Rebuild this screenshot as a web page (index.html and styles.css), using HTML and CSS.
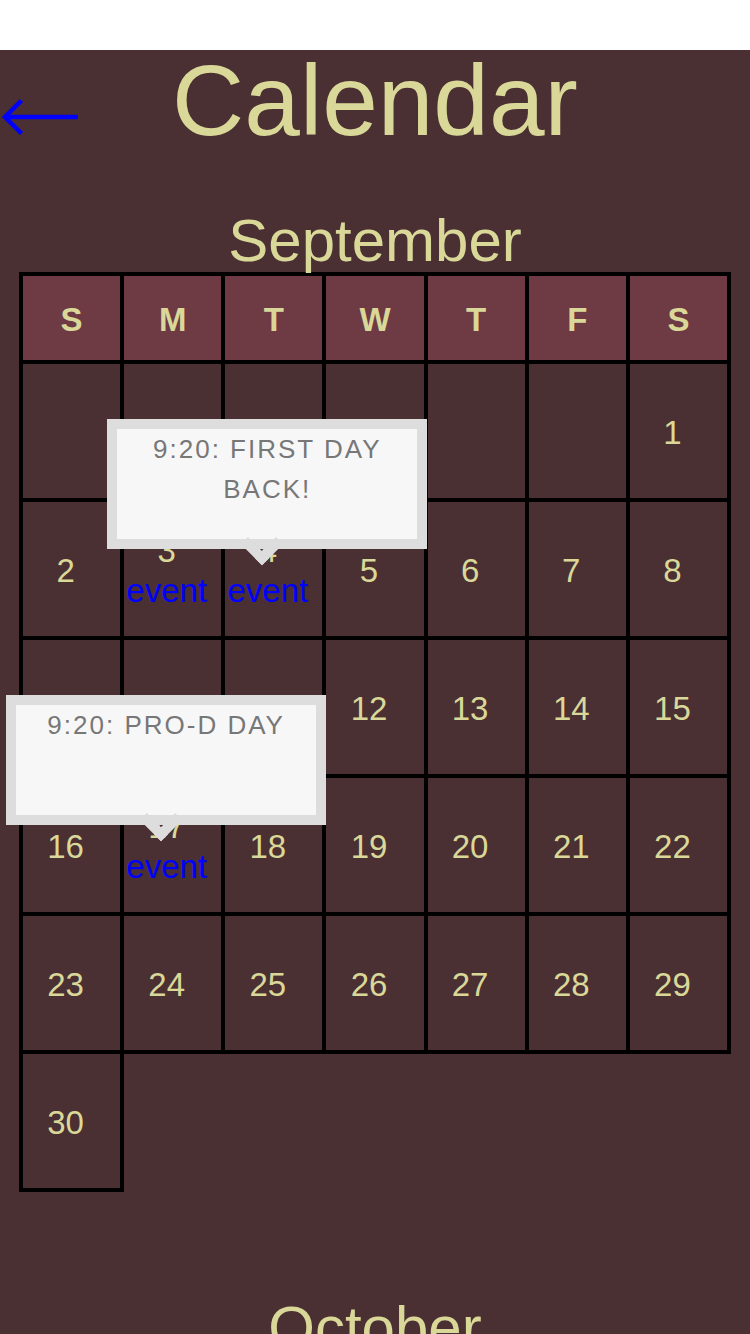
FILE: index.html
```html
<!DOCTYPE html>
<html lang="en">
<head>
<meta charset="utf-8">
<title>Calendar</title>
<link rel="stylesheet" href="styles.css">
</head>
<body>
<div class="topbar"></div>
<main class="page">
  <header class="header">
    <a class="back" href="#" aria-label="Back">
      <svg width="80" height="40" viewBox="0 0 80 40">
        <path d="M4 20 H78" stroke="#0000ff" stroke-width="4.5" fill="none"/>
        <path d="M21.5 3.5 L5 20 L21.5 36.5" stroke="#0000ff" stroke-width="4.5" fill="none"/>
      </svg>
    </a>
    <h1 class="title">Calendar</h1>
  </header>

  <section class="month">
    <h2 class="month-name">September</h2>
    <table class="cal">
      <thead>
        <tr>
          <th>S</th><th>M</th><th>T</th><th>W</th><th>T</th><th>F</th><th>S</th>
        </tr>
      </thead>
      <tbody>
        <tr>
          <td></td><td></td><td></td><td></td><td></td><td></td>
          <td><div class="num">1</div></td>
        </tr>
        <tr>
          <td><div class="num">2</div></td>
          <td><div class="num">3</div><a class="event" href="#">event</a></td>
          <td><div class="num">4</div><a class="event" href="#">event</a>
            <div class="tip">9:20: First day back!</div>
          </td>
          <td><div class="num">5</div></td>
          <td><div class="num">6</div></td>
          <td><div class="num">7</div></td>
          <td><div class="num">8</div></td>
        </tr>
        <tr>
          <td><div class="num">9</div></td>
          <td><div class="num">10</div></td>
          <td><div class="num">11</div></td>
          <td><div class="num">12</div></td>
          <td><div class="num">13</div></td>
          <td><div class="num">14</div></td>
          <td><div class="num">15</div></td>
        </tr>
        <tr>
          <td><div class="num">16</div></td>
          <td><div class="num">17</div><a class="event" href="#">event</a>
            <div class="tip">9:20: Pro-D Day</div>
          </td>
          <td><div class="num">18</div></td>
          <td><div class="num">19</div></td>
          <td><div class="num">20</div></td>
          <td><div class="num">21</div></td>
          <td><div class="num">22</div></td>
        </tr>
        <tr>
          <td><div class="num">23</div></td>
          <td><div class="num">24</div></td>
          <td><div class="num">25</div></td>
          <td><div class="num">26</div></td>
          <td><div class="num">27</div></td>
          <td><div class="num">28</div></td>
          <td><div class="num">29</div></td>
        </tr>
        <tr>
          <td><div class="num">30</div></td>
        </tr>
      </tbody>
    </table>
  </section>

  <section class="month">
    <h2 class="month-name next">October</h2>
  </section>
</main>
</body>
</html>
```

FILE: styles.css
```css
html, body {
  margin: 0;
  padding: 0;
  background: #ffffff;
}

body {
  font-family: "Liberation Sans", Arial, Helvetica, sans-serif;
}

.topbar {
  height: 50px;
  background: #ffffff;
}

.page {
  background: #4a3032;
  color: #dad899;
  min-height: 1284px;
  padding-bottom: 200px;
  overflow: hidden;
}

.header {
  display: grid;
  grid-template-columns: 1fr auto 1fr;
  height: 100px;
}

.back {
  grid-column: 1;
  grid-row: 1;
  justify-self: start;
  align-self: start;
  margin-top: 47px;
  display: block;
  width: 80px;
  height: 40px;
}

.back svg {
  display: block;
}

.title {
  grid-column: 2;
  grid-row: 1;
  margin: 0;
  font-size: 100px;
  line-height: 100px;
  font-weight: normal;
  color: #dad899;
}

.month-name {
  margin: 61px 0 0 0;
  font-size: 60px;
  line-height: 60px;
  font-weight: normal;
  text-align: center;
  color: #dad899;
}

.month-name.next {
  margin-top: 106px;
}

.cal {
  border-collapse: collapse;
  table-layout: fixed;
  width: 712px;
  margin: 1px 0 0 19px;
}

.cal th,
.cal td {
  border: 4px solid #000000;
  padding: 0;
}

.cal th {
  background: #6e3a44;
  color: #dad899;
  font-size: 33px;
  font-weight: bold;
  padding-top: 4px;
  line-height: 80px;
  height: 80px;
  text-align: center;
}

.cal td {
  position: relative;
  height: 130px;
  padding: 4px 12px 0 0;
  text-align: center;
  vertical-align: middle;
  font-size: 33px;
  line-height: 40px;
  color: #dad899;
}

.num {
  display: block;
}

.event {
  display: block;
  color: #0000ff;
  text-decoration: none;
}

.tip {
  position: absolute;
  left: -118px;
  top: -83px;
  width: 300px;
  height: 110px;
  border: 10px solid #dddddd;
  background: #f7f7f7;
  color: #777777;
  font-size: 26px;
  line-height: 40px;
  letter-spacing: 2px;
  text-transform: uppercase;
  text-align: center;
  z-index: 2;
}

.tip::after {
  content: "";
  position: absolute;
  left: 130px;
  top: 100px;
  width: 20px;
  height: 20px;
  border-right: 10px solid #dddddd;
  border-bottom: 10px solid #dddddd;
  transform: rotate(45deg);
}
```
